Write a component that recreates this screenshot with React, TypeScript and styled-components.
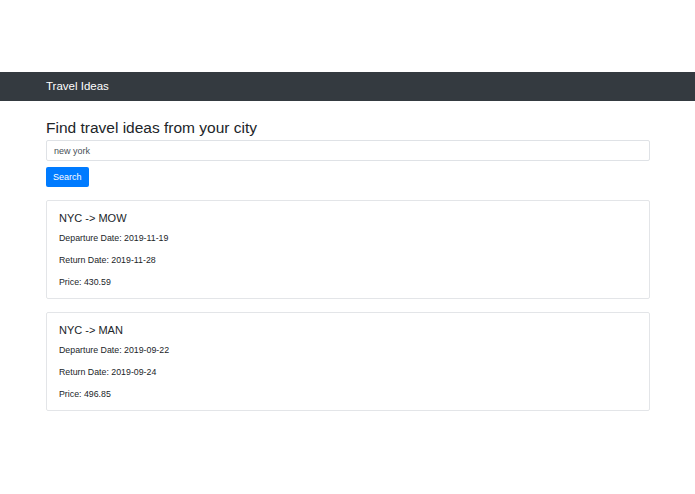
import * as React from 'react';
import styled, { createGlobalStyle } from 'styled-components';

const GlobalStyle = createGlobalStyle`
  body {
    margin: 0;
    background: #fff;
    font-family: "Liberation Sans", Arial, sans-serif;
    color: #212529;
  }
`;

type Trip = {
  from: string;
  to: string;
  departure: string;
  returnDate: string;
  price: string;
};

const trips: Trip[] = [
  { from: 'NYC', to: 'MOW', departure: '2019-11-19', returnDate: '2019-11-28', price: '430.59' },
  { from: 'NYC', to: 'MAN', departure: '2019-09-22', returnDate: '2019-09-24', price: '496.85' },
];

const Page = styled.div`
  padding-top: 72px;
`;

const NavBar = styled.nav`
  height: 29px;
  background: #343a40;
  display: flex;
  align-items: center;
  padding: 0 46px;
`;

const Brand = styled.span`
  color: #fff;
  font-size: 11.5px;
  margin-top: -2px;
`;

const Container = styled.main`
  width: 604px;
  margin-left: 46px;
  padding-top: 17px;
`;

const Heading = styled.h1`
  margin: 0 0 2px;
  font-size: 15.5px;
  font-weight: 400;
  line-height: 20px;
`;

const SearchInput = styled.input`
  display: block;
  box-sizing: border-box;
  width: 100%;
  height: 21px;
  padding: 0 7px;
  border: 1px solid #dfe2e6;
  border-radius: 2px;
  font-family: inherit;
  font-size: 9px;
  color: #495057;
  outline: none;
`;

const SearchButton = styled.button`
  display: block;
  margin-top: 6px;
  height: 20px;
  padding: 0 7px;
  background: #007bff;
  color: #fff;
  border: none;
  border-radius: 2px;
  font-family: inherit;
  font-size: 9px;
`;

const List = styled.div`
  margin-top: 13px;
  display: flex;
  flex-direction: column;
  gap: 13px;
`;

const Card = styled.div`
  box-sizing: border-box;
  height: 99px;
  border: 1px solid #e3e5e8;
  border-radius: 2px;
  padding: 9px 12px 0;
`;

const CardTitle = styled.h5`
  margin: 0 0 1px;
  font-size: 11px;
  font-weight: 400;
  line-height: 16px;
`;

const CardLine = styled.p`
  margin: 0;
  font-size: 8.8px;
  line-height: 22px;
`;

export default function App() {
  return (
    <Page>
      <GlobalStyle />
      <NavBar>
        <Brand>Travel Ideas</Brand>
      </NavBar>
      <Container>
        <Heading>Find travel ideas from your city</Heading>
        <SearchInput defaultValue="new york" />
        <SearchButton>Search</SearchButton>
        <List>
          {trips.map((t) => (
            <Card key={t.to}>
              <CardTitle>
                {t.from} -&gt; {t.to}
              </CardTitle>
              <CardLine>Departure Date: {t.departure}</CardLine>
              <CardLine>Return Date: {t.returnDate}</CardLine>
              <CardLine>Price: {t.price}</CardLine>
            </Card>
          ))}
        </List>
      </Container>
    </Page>
  );
}
